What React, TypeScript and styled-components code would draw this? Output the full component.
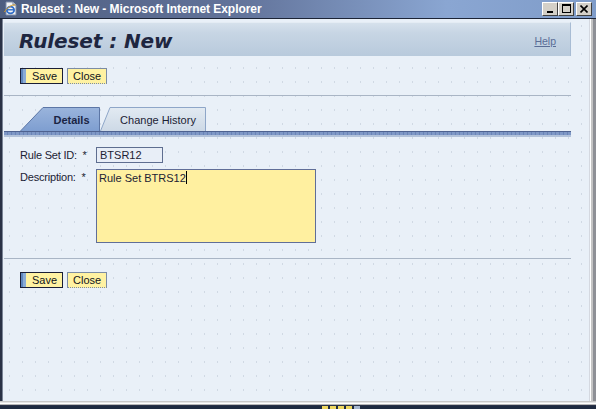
import React from "react";
import styled, { createGlobalStyle } from "styled-components";

const Global = createGlobalStyle`
  html, body { margin: 0; padding: 0; overflow: hidden; background: #1e2a40; }
  * { box-sizing: border-box; }
`;

const Window = styled.div`
  width: 596px;
  height: 409px;
  display: flex;
  flex-direction: column;
  font-family: "Liberation Sans", Arial, sans-serif;
  font-size: 11px;
  color: #1c2234;
  background: #1e2a40;
`;

const TitleBar = styled.div`
  height: 19px;
  display: flex;
  align-items: center;
  padding: 0 4px 1px 3px;
  background: linear-gradient(90deg, #4e5e80 0%, #62739a 40%, #8aa6d2 75%, #7f9cc9 100%);
  border-bottom: 1px solid #1c2436;
`;

const TitleText = styled.span`
  flex: 1;
  margin-left: 3px;
  color: #ffffff;
  font-weight: bold;
  font-size: 12px;
  letter-spacing: -0.05px;
`;

const CaptionButtons = styled.div`
  display: flex;
`;

const CapBtn = styled.div<{ $gap?: boolean }>`
  width: 16px;
  height: 14px;
  margin-left: ${(p) => (p.$gap ? "2px" : "0")};
  background: #d4d0c8;
  border-top: 1px solid #ffffff;
  border-left: 1px solid #ffffff;
  border-right: 1px solid #404040;
  border-bottom: 1px solid #404040;
  display: flex;
  align-items: center;
  justify-content: center;
`;

const Middle = styled.div`
  flex: 1;
  display: flex;
  min-height: 0;
`;

const LeftFrame = styled.div`
  width: 3px;
  background: linear-gradient(90deg, #2a3246 0 2px, #7a8496 2px);
`;

const RightFrame = styled.div`
  width: 7px;
  background: linear-gradient(90deg, #d4d8e0 0 1px, #ffffff 1px 2px, #c4c4c4 2px 4px, #8e9096 4px);
`;

const Content = styled.div`
  flex: 1;
  background-color: #e9f0f8;
  background-image: radial-gradient(circle, #d0d9e4 0.6px, transparent 0.8px);
  background-size: 13px 14px;
  padding: 3px 18px 0 1px;
  display: flex;
  flex-direction: column;
`;

const Header = styled.div`
  height: 34px;
  display: flex;
  align-items: center;
  justify-content: space-between;
  padding: 2px 14px 0 15px;
  background: linear-gradient(180deg, #d6e1ec 0%, #c7d5e4 30%, #b8cadc 100%);
  border-top: 1px solid #e4ecf4;
  border-right: 1px solid #a8bcd4;
`;

const PageTitle = styled.h1`
  margin: 0;
  font-family: "DejaVu Sans", Verdana, sans-serif;
  font-size: 20px;
  font-weight: bold;
  font-style: italic;
  color: #1e2640;
  letter-spacing: -0.1px;
`;

const HelpLink = styled.a`
  font-size: 10.5px;
  color: #5a6d96;
  text-decoration: underline;
  margin-top: 1px;
`;

const ButtonRow = styled.div<{ $top: number; $bottom: number }>`
  display: flex;
  gap: 4px;
  padding: ${(p) => `${p.$top}px 0 ${p.$bottom}px 16px`};
`;

const Btn = styled.button<{ $primary?: boolean }>`
  height: 16px;
  padding: 0 ${(p) => (p.$primary ? "5px 0 11px" : "5px")};
  font-family: "Liberation Sans", Arial, sans-serif;
  font-size: 11px;
  color: #101420;
  line-height: 14px;
  background: ${(p) =>
    p.$primary
      ? "linear-gradient(90deg, #5f86bd 0 2px, #8aacd6 2px 5px, #fff2a2 5px)"
      : "#fff2a2"};
  border: 1px solid ${(p) => (p.$primary ? "#1a1e36" : "#7c8ca4")};
  border-bottom-style: ${(p) => (p.$primary ? "solid" : "dotted")};
  border-radius: 0;
  cursor: pointer;
`;

const Separator = styled.div<{ $mt?: number }>`
  height: 1px;
  margin-top: ${(p) => p.$mt ?? 0}px;
  background: #a9b5c5;
`;

const TabStrip = styled.div`
  display: flex;
  align-items: flex-end;
  height: 24px;
  margin-top: 11px;
  padding-left: 16px;
`;

const Tab = styled.div<{ $w: number; $slant: number; $active?: boolean }>`
  position: relative;
  width: ${(p) => p.$w}px;
  height: 24px;
  display: flex;
  align-items: center;
  justify-content: center;
  padding-left: ${(p) => p.$slant}px;
  padding-top: 1px;
  font-weight: ${(p) => (p.$active ? "bold" : "normal")};
  color: ${(p) => (p.$active ? "#1a2444" : "#1c2234")};
  & > svg {
    position: absolute;
    left: 0;
    top: 0;
  }
  & > span {
    position: relative;
  }
`;

const TabBar = styled.div`
  height: 6px;
  border-top: 1px solid #4e6290;
  background: repeating-linear-gradient(90deg, #7f98c6 0 3px, #6a84b6 3px 4px);
  border-bottom: 2px solid #b2c2da;
`;

const Form = styled.div`
  display: grid;
  grid-template-columns: 76px auto;
  row-gap: 6px;
  padding: 10px 0 0 16px;
  align-items: start;
`;

const Label = styled.label`
  padding-top: 2px;
  white-space: nowrap;
  letter-spacing: -0.2px;
`;

const TextInput = styled.div`
  width: 67px;
  height: 16px;
  padding: 1px 3px;
  background: #e8eef7;
  border: 1px solid #5e6e90;
  line-height: 13px;
`;

const TextArea = styled.div`
  width: 220px;
  height: 74px;
  padding: 1px 2px;
  background: #fff0a0;
  border: 1px solid #606e98;
  line-height: 14px;
`;

const Caret = styled.span`
  display: inline-block;
  width: 1px;
  height: 13px;
  background: #000;
  vertical-align: -2px;
`;

const BottomFrame = styled.div`
  height: 8px;
  background: linear-gradient(180deg, #c8c8c8 0 1px, #e6e6e6 1px 2px, #ffffff 2px 3px, #b8b8b8 3px 4px, #2a3248 4px 5px, #1e2a40 5px);
  position: relative;
`;

const TrayIcons = styled.div`
  position: absolute;
  left: 322px;
  top: 5px;
  display: flex;
  gap: 2px;
`;

const TrayDot = styled.div<{ $c: string }>`
  width: 6px;
  height: 3px;
  background: ${(p) => p.$c};
`;

const IEIcon = () => (
  <svg width="15" height="15" viewBox="0 0 15 15">
    <path d="M3 1h7l3 3v10H3z" fill="#f4f4f4" stroke="#7c8ca8" strokeWidth="1" />
    <path d="M10 1v3h3" fill="#d0d8e8" stroke="#7c8ca8" strokeWidth="1" />
    <ellipse cx="7.5" cy="9" rx="3.6" ry="3.4" fill="none" stroke="#2e6cc8" strokeWidth="1.8" />
    <path d="M4 8.8h7" stroke="#2e6cc8" strokeWidth="1.4" />
    <path d="M1.5 11c2-4 8-8 11-7" fill="none" stroke="#e0a020" strokeWidth="1" />
  </svg>
);

const TabShape = ({ w, slant, active }: { w: number; slant: number; active?: boolean }) => (
  <svg width={w} height={24} viewBox={`0 0 ${w} 24`}>
    <defs>
      <linearGradient id={active ? "ga" : "gi"} x1="0" y1="0" x2="0" y2="1">
        <stop offset="0" stopColor={active ? "#9ab4dc" : "#e2eaf2"} />
        <stop offset="1" stopColor={active ? "#7e9ed0" : "#cdd9e6"} />
      </linearGradient>
    </defs>
    <path
      d={`M0.5 24 L${slant} 0.5 L${w - 0.5} 0.5 L${w - 0.5} 24`}
      fill={`url(#${active ? "ga" : "gi"})`}
      stroke={active ? "#5c76a6" : "#8ea6c8"}
      strokeWidth="1"
    />
  </svg>
);

export default function App() {
  return (
    <>
      <Global />
      <Window>
        <TitleBar>
          <IEIcon />
          <TitleText>Ruleset : New - Microsoft Internet Explorer</TitleText>
          <CaptionButtons>
            <CapBtn>
              <svg width="8" height="8" viewBox="0 0 8 8">
                <rect x="1" y="6" width="6" height="2" fill="#000" />
              </svg>
            </CapBtn>
            <CapBtn>
              <svg width="9" height="9" viewBox="0 0 9 9">
                <rect x="0.5" y="0.5" width="8" height="8" fill="none" stroke="#000" />
                <rect x="0" y="0" width="9" height="2" fill="#000" />
              </svg>
            </CapBtn>
            <CapBtn $gap>
              <svg width="8" height="8" viewBox="0 0 8 8">
                <path d="M0.5 0.5L7.5 7.5M7.5 0.5L0.5 7.5" stroke="#000" strokeWidth="1.6" />
              </svg>
            </CapBtn>
          </CaptionButtons>
        </TitleBar>
        <Middle>
          <LeftFrame />
          <Content>
            <Header>
              <PageTitle>Ruleset : New</PageTitle>
              <HelpLink>Help</HelpLink>
            </Header>
            <ButtonRow $top={12} $bottom={11}>
              <Btn $primary>Save</Btn>
              <Btn>Close</Btn>
            </ButtonRow>
            <Separator />
            <TabStrip>
              <Tab $w={80} $slant={23} $active>
                <TabShape w={80} slant={23} active />
                <span>Details</span>
              </Tab>
              <Tab $w={106} $slant={10}>
                <TabShape w={106} slant={10} />
                <span>Change History</span>
              </Tab>
            </TabStrip>
            <TabBar />
            <Form>
              <Label>Rule Set ID: &nbsp;*</Label>
              <TextInput>BTSR12</TextInput>
              <Label>Description: &nbsp;*</Label>
              <TextArea>
                Rule Set BTRS12
                <Caret />
              </TextArea>
            </Form>
            <Separator $mt={15} />
            <ButtonRow $top={13} $bottom={0}>
              <Btn $primary>Save</Btn>
              <Btn>Close</Btn>
            </ButtonRow>
          </Content>
          <RightFrame />
        </Middle>
        <BottomFrame>
          <TrayIcons>
            <TrayDot $c="#f0d860" />
            <TrayDot $c="#f0d860" />
            <TrayDot $c="#f0d860" />
            <TrayDot $c="#f0d860" />
            <TrayDot $c="#a8b8d0" />
          </TrayIcons>
        </BottomFrame>
      </Window>
    </>
  );
}
